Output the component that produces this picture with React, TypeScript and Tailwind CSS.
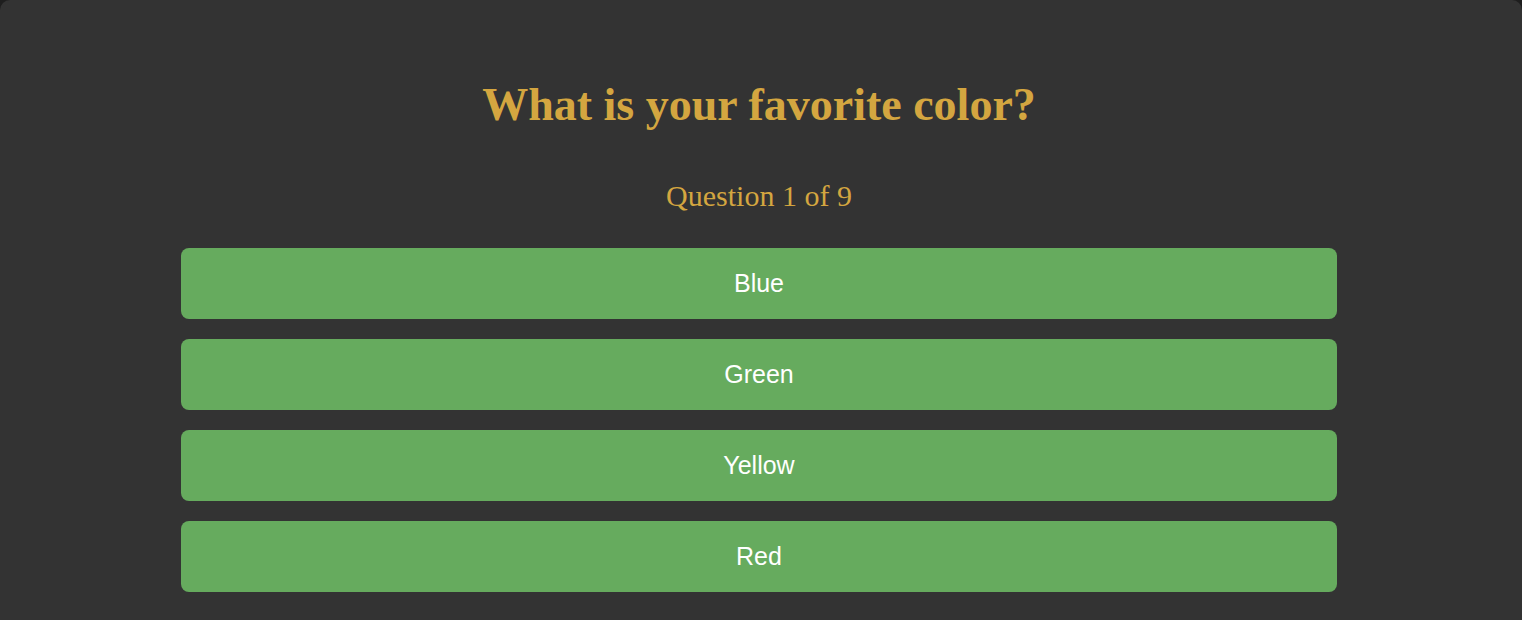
const answers = ['Blue', 'Green', 'Yellow', 'Red'];

const App = () => {
  return (
    <div className="w-full h-[620px] bg-[#1e1e1e] overflow-hidden">
      <div className="h-[700px] bg-[#333333] rounded-[10px] pt-[77px] pl-[181px] pr-[185px]">
        <h1
          className="text-center text-[#d4a640] font-bold text-[46px] leading-[56px]"
          style={{ fontFamily: '"Liberation Serif", serif' }}
        >
          What is your favorite color?
        </h1>
        <p
          className="text-center text-[#d4a640] text-[30px] leading-[40px] mt-[43px]"
          style={{ fontFamily: '"Liberation Serif", serif' }}
        >
          Question 1 of 9
        </p>
        <div className="flex flex-col gap-[20px] mt-[32px]">
          {answers.map((a) => (
            <button
              key={a}
              className="h-[71px] w-full rounded-[8px] bg-[#66ab5e] text-white text-[25px] font-['Liberation_Sans',sans-serif]"
            >
              {a}
            </button>
          ))}
        </div>
      </div>
    </div>
  );
};

export default App;
